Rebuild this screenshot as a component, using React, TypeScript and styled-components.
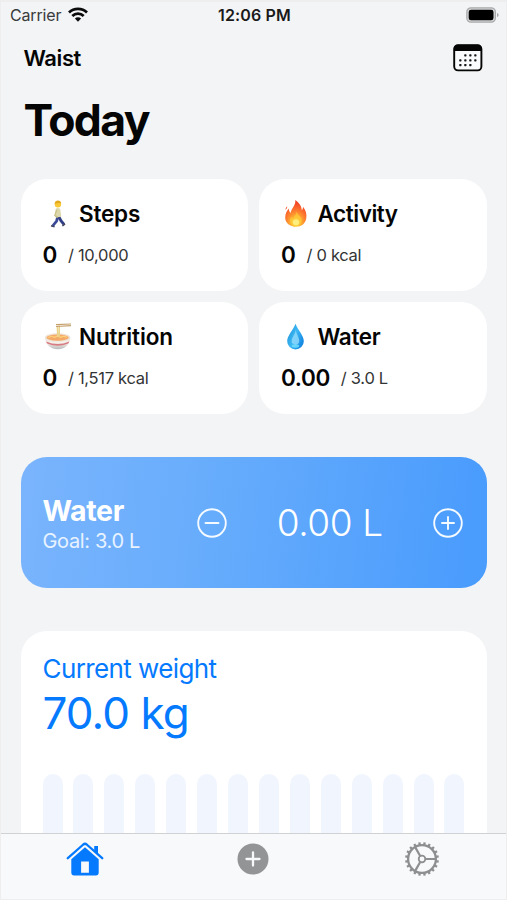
import React from "react";
import styled, { createGlobalStyle } from "styled-components";

const GlobalStyle = createGlobalStyle`
  * { box-sizing: border-box; }
  html, body { margin: 0; padding: 0; background: #f3f4f6; }
  body { font-family: Inter, "Liberation Sans", sans-serif; color: #050505; }
  h1, h2, p { margin: 0; }
  button { padding: 0; border: 0; background: none; color: inherit; display: block; }
  svg { display: block; }
`;

const Screen = styled.div`
  width: 507px;
  height: 900px;
  overflow: hidden;
  display: flex;
  flex-direction: column;
  background: #f3f4f6;
  border: 1px solid #eeeeef;
  border-top-width: 2px;
`;

const StatusBar = styled.div`
  height: 28px;
  flex: none;
  display: grid;
  grid-template-columns: 1fr auto 1fr;
  align-items: center;
  padding: 0 7px 3px 9px;
`;

const Label = styled.span<{ $size: number; $line: number; $weight?: number; $track?: number; $color?: string }>`
  display: block;
  white-space: nowrap;
  font-size: ${(p) => p.$size}px;
  line-height: ${(p) => p.$line}px;
  font-weight: ${(p) => p.$weight ?? 400};
  letter-spacing: ${(p) => p.$track ?? 0}px;
  color: ${(p) => p.$color ?? "inherit"};
`;

const Carrier = styled.div`
  display: flex;
  align-items: center;
  gap: 7px;
`;

const BatterySlot = styled.div`
  justify-self: end;
`;

const Content = styled.main`
  flex: 1;
  min-height: 0;
  overflow: hidden;
  display: flex;
  flex-direction: column;
  padding: 0 19.5px;
`;

const TopRow = styled.header`
  height: 56px;
  flex: none;
  display: flex;
  align-items: center;
  justify-content: space-between;
  padding: 0 4px 0 3px;
`;

const Title = styled.div`
  height: 93px;
  flex: none;
  padding: 4px 0 0 3px;
`;

const Stats = styled.section`
  flex: none;
  display: grid;
  grid-template-columns: 1fr 1fr;
  grid-auto-rows: 112px;
  gap: 11px;
`;

const StatCard = styled.article`
  border-radius: 26px;
  background: #fff;
  padding: 20px 22px;
`;

const StatHead = styled.div`
  display: flex;
  align-items: center;
  gap: 6.5px;
  height: 30px;
`;

const StatValue = styled.div`
  display: flex;
  align-items: center;
  gap: 11px;
  margin-top: 11px;
`;

const WaterCard = styled.section`
  flex: none;
  height: 131px;
  margin-top: 43px;
  border-radius: 26px;
  padding: 0 24px 0 22px;
  display: flex;
  align-items: center;
  color: #fff;
  background: linear-gradient(97deg, #7ab4fd 0%, #68adfc 38%, #4a9cfd 96%);
`;

const WaterInfo = styled.div`
  width: 154.5px;
  padding-top: 4px;
`;

const WaterAmount = styled.div`
  flex: 1;
  display: flex;
  justify-content: center;
`;

const WeightCard = styled.section`
  flex: none;
  height: 270px;
  margin-top: 43px;
  border-radius: 26px;
  padding: 21px 22px;
  background: #fff;
  color: #057aff;
`;

const Bars = styled.div`
  display: flex;
  justify-content: space-between;
  margin-top: 34px;
`;

const Bar = styled.div`
  width: 20px;
  height: 120px;
  border-radius: 10px;
  background: #f1f6fe;
`;

const TabBar = styled.nav`
  flex: none;
  height: 66px;
  border-top: 1px solid #cfd1d3;
  background: #f8f9fa;
  display: grid;
  grid-template-columns: repeat(3, 1fr);
  grid-template-rows: 36px;
  align-items: center;
  justify-items: center;
  padding-top: 7px;
`;

const WifiIcon = () => (
  <svg width="20" height="15" viewBox="0 0 20 15">
    <g fill="none" stroke="#0b0b0b" strokeWidth="2.7">
      <path d="M1 5.5a12.8 12.8 0 0 1 18 0" />
      <path d="M4.3 9a8.1 8.1 0 0 1 11.4 0" />
    </g>
    <path d="M10 14.7 6.9 11.5a4.4 4.4 0 0 1 6.2 0z" fill="#0b0b0b" />
  </svg>
);

const BatteryIcon = () => (
  <svg width="33" height="16" viewBox="0 0 33 16">
    <rect x="0.8" y="0.8" width="28.6" height="14.4" rx="4.2" fill="#d5d6d7" stroke="#a9aaab" strokeWidth="1.2" />
    <rect x="2.7" y="2.7" width="24.8" height="10.6" rx="2.4" fill="#000" />
    <path d="M31 6q1.7.5 1.7 2T31 10z" fill="#a9aaab" />
  </svg>
);

const dots: [number, number][] = [
  [12, 11], [17, 11], [22, 11],
  [7, 16], [12, 16], [17, 16], [22, 16],
  [7, 20.7], [12, 20.7], [17, 20.7],
];

const CalendarIcon = () => (
  <svg width="30" height="28" viewBox="0 0 30 28">
    <rect x="1.2" y="1.2" width="27.2" height="25.2" rx="3.8" fill="#fafbfc" stroke="#050505" strokeWidth="1.9" />
    <path d="M.8 7V4.8Q.8.8 4.8.8h20q4 0 4 4V7z" fill="#050505" />
    {dots.map(([x, y]) => (
      <rect key={`${x}-${y}`} x={x - 0.8} y={y - 0.8} width="2.3" height="2.3" rx=".7" fill="#17171c" />
    ))}
  </svg>
);

const WalkerIcon = () => (
  <svg width="30" height="30" viewBox="0 0 30 30">
    <path d="M15 17 13.6 22 9.6 27" fill="none" stroke="#3b4a98" strokeWidth="2.8" />
    <path d="m15.3 17 2.8 5 2.9 3.4" fill="none" stroke="#323f86" strokeWidth="2.9" />
    <path d="m8 26.8 3.6 1M19.4 27l2.6-2.2" stroke="#44465f" strokeWidth="1.6" />
    <path d="M12.6 10q2.2-2 4.6 0l1.2 7.7-6 .9z" fill="#dcd8ac" />
    <path d="m13.7 11-1.9 5.4 2.9 2" fill="none" stroke="#c9bf86" strokeWidth="1.3" />
    <circle cx="14.9" cy="5.3" r="3.2" fill="#fac936" />
    <path d="M11.7 5q.2-3.5 3.3-3.6 2.7.1 3.2 2.9l-3.2-.4z" fill="#e2a71d" />
  </svg>
);

const FlameIcon = () => (
  <svg width="30" height="30" viewBox="0 0 30 30">
    <defs>
      <radialGradient id="flame" cx=".5" cy=".88" r=".85">
        <stop offset="0" stopColor="#ffe13b" />
        <stop offset=".3" stopColor="#ffad31" />
        <stop offset=".65" stopColor="#fc6c2d" />
        <stop offset="1" stopColor="#ed3926" />
      </radialGradient>
    </defs>
    <path d="M14.3 1c4.6 3.2 6.2 6.5 6.5 10.2 1-1 1.3-2.4 1.2-3.5 2.8 3.3 4.1 7.6 3.2 12-1 5-5 8-10 8-6.3 0-11-3.8-11-9.3 0-3.7 1.8-6.7 3.7-8.8.1 2 .5 3.3 1.6 4.4C10.7 8.9 15 6 14.3 1z" fill="url(#flame)" />
    <path d="M6.2 7.2q-1.7 1.5-1.8 3.7 2.4-1.2 1.8-3.7z" fill="#f45129" />
    <path d="M15.5 12c.8 4 4.6 4.5 5.2 8.7.4 3.4-2 5.7-5.4 5.8-3.8.1-6.5-2.1-6.4-5.2.1-2 1.4-3.1 2.2-3.3.2 1 .5 1.6 1.2 2 .1-3.1 3.7-4.4 3.2-8z" fill="#ffd43b" opacity=".6" />
    <ellipse cx="15" cy="23.2" rx="3.2" ry="3" fill="#fff58e" opacity=".8" />
  </svg>
);

const BowlIcon = () => (
  <svg width="30" height="30" viewBox="0 0 30 30">
    <defs>
      <linearGradient id="bowl" x1="0" y1="0" x2="0" y2="1">
        <stop offset="0" stopColor="#e9e2dc" />
        <stop offset=".45" stopColor="#f7f1ea" />
        <stop offset="1" stopColor="#b9babd" />
      </linearGradient>
    </defs>
    <path d="M2 15.7c.4 6.2 4 9.2 8 10.7q5 1.5 9.5 0c4.7-1.8 7.3-5.1 7.8-10.7z" fill="url(#bowl)" />
    <path d="M3.1 19.4q11.6 5.1 23.2 0l-1 2q-10.6 4.6-21.3 0z" fill="#d77c83" />
    <ellipse cx="14.6" cy="15.3" rx="12.6" ry="4" fill="#eee1d3" />
    <ellipse cx="14.6" cy="15.6" rx="11.1" ry="3.1" fill="#f4a968" />
    <path d="M5.3 15.7q3.4-2.3 6.2-.2 3.4-2.7 6 0 3.2-2.2 6.2 0" fill="none" stroke="#ffd17a" strokeWidth="1.1" />
    <path d="m14.3 4.3.5 11M16.3 3.6l-.1 11" stroke="#ead48c" strokeWidth="1.5" />
    <path d="m13 2.6 15-.6M13 4.5l15-.9" stroke="#c5a06c" strokeWidth="1.2" />
  </svg>
);

const DropIcon = () => (
  <svg width="30" height="30" viewBox="0 0 30 30">
    <defs>
      <linearGradient id="drop" x1="0" y1="0" x2="1" y2=".6">
        <stop offset="0" stopColor="#168bd1" />
        <stop offset=".55" stopColor="#3fb9f5" />
        <stop offset="1" stopColor="#1689e2" />
      </linearGradient>
    </defs>
    <path d="M14.5 1.8c2.6 7 8.3 11.5 8.3 17.4a8.3 8.3 0 0 1-16.6 0C6.2 13.3 12 8.8 14.5 1.8z" fill="url(#drop)" />
    <path d="M14.5 6.6c1 6-4.9 8.4-3.6 14.2 2 2.8 6.2 2.5 7.2-.6 1.2-4.5-3.4-7.7-3.6-13.6z" fill="#9adefd" opacity=".75" />
    <ellipse cx="14.5" cy="24" rx="3.7" ry="1.7" fill="#7be5ff" opacity=".75" />
  </svg>
);

const CircleButtonIcon = ({ plus = false }: { plus?: boolean }) => (
  <svg width="30" height="30" viewBox="0 0 30 30" fill="none" stroke="#f4faff" strokeWidth="1.9" strokeLinecap="round">
    <circle cx="15" cy="15" r="13.8" />
    <path d={plus ? "M9 15h12M15 9v12" : "M8.5 15h13"} />
  </svg>
);

const HomeIcon = () => (
  <svg width="38" height="34" viewBox="0 0 38 34">
    <path d="M1.8 16.2 17.3 2.5q1.7-1.4 3.4 0L36.2 16.2" fill="none" stroke="#057aff" strokeWidth="2.3" strokeLinecap="round" />
    <path d="M28.2 9V4h3.8v8.4z" fill="#057aff" />
    <path fillRule="evenodd" d="M5.3 17.2 19 5.2 32.7 17.2V30.5q0 2.9-2.9 2.9H8.2q-2.9 0-2.9-2.9zM15.1 19.5v11.3h7.8V19.5z" fill="#057aff" />
  </svg>
);

const AddIcon = () => (
  <svg width="32" height="32" viewBox="0 0 32 32">
    <circle cx="16" cy="16" r="15.5" fill="#939495" />
    <path d="M9.5 16h13M16 9.5v13" stroke="#f8f9fa" strokeWidth="2.3" strokeLinecap="round" />
  </svg>
);

const teeth = Array.from({ length: 20 }, (_, i) => i * 18 + 9);

const GearIcon = () => (
  <svg width="36" height="36" viewBox="0 0 36 36" fill="none" stroke="#8e8f91">
    <circle cx="18" cy="18" r="13.9" strokeWidth="2.3" />
    {teeth.map((a) => (
      <path key={a} d="M18 1.1v3" strokeWidth="2.3" transform={`rotate(${a} 18 18)`} />
    ))}
    <circle cx="18" cy="18" r="3.3" strokeWidth="1.8" />
    <path d="M21.5 18H31M16.2 15 11.3 6.4M16.2 21 11.3 29.6" strokeWidth="2.2" />
  </svg>
);

type Stat = { name: string; value: string; goal: string; icon: React.ReactNode; track: number };

const stats: Stat[] = [
  { name: "Steps", value: "0", goal: "/ 10,000", icon: <WalkerIcon />, track: -0.2 },
  { name: "Activity", value: "0", goal: "/ 0 kcal", icon: <FlameIcon />, track: -0.45 },
  { name: "Nutrition", value: "0", goal: "/ 1,517 kcal", icon: <BowlIcon />, track: -0.15 },
  { name: "Water", value: "0.00", goal: "/ 3.0 L", icon: <DropIcon />, track: -0.35 },
];

export default function App() {
  return (
    <>
      <GlobalStyle />
      <Screen>
        <StatusBar>
          <Carrier>
            <Label $size={16} $line={20} $track={-0.15} $color="#3a3b3c">Carrier</Label>
            <WifiIcon />
          </Carrier>
          <Label $size={16} $line={20} $weight={600} $track={0.15} $color="#1a1a1a">12:06 PM</Label>
          <BatterySlot><BatteryIcon /></BatterySlot>
        </StatusBar>
        <Content>
          <TopRow>
            <Label as="h2" $size={22} $line={28} $weight={600} $track={-0.4}>Waist</Label>
            <button aria-label="Calendar"><CalendarIcon /></button>
          </TopRow>
          <Title>
            <Label as="h1" $size={44.5} $line={60} $weight={700} $track={-1.6}>Today</Label>
          </Title>
          <Stats>
            {stats.map((s) => (
              <StatCard key={s.name}>
                <StatHead>
                  {s.icon}
                  <Label $size={22.5} $line={30} $weight={600} $track={s.track}>{s.name}</Label>
                </StatHead>
                <StatValue>
                  <Label $size={22.5} $line={30} $weight={600} $track={-0.4}>{s.value}</Label>
                  <Label $size={16.5} $line={30} $track={-0.3} $color="#333435">{s.goal}</Label>
                </StatValue>
              </StatCard>
            ))}
          </Stats>
          <WaterCard>
            <WaterInfo>
              <Label as="h2" $size={28.5} $line={34} $weight={700} $track={-0.35}>Water</Label>
              <Label as="p" $size={20} $line={27} $track={-0.35} $color="#e8f3ff">Goal: 3.0 L</Label>
            </WaterInfo>
            <button aria-label="Remove water"><CircleButtonIcon /></button>
            <WaterAmount>
              <Label $size={37} $line={44} $weight={350} $track={-0.4}>0.00 L</Label>
            </WaterAmount>
            <button aria-label="Add water"><CircleButtonIcon plus /></button>
          </WaterCard>
          <WeightCard>
            <Label as="h2" $size={26} $line={34} $track={-0.6}>Current weight</Label>
            <Label as="p" $size={44} $line={54} $track={-0.9}>70.0 kg</Label>
            <Bars>
              {Array.from({ length: 14 }, (_, i) => <Bar key={i} />)}
            </Bars>
          </WeightCard>
        </Content>
        <TabBar>
          <button aria-label="Home"><HomeIcon /></button>
          <button aria-label="Add"><AddIcon /></button>
          <button aria-label="Settings"><GearIcon /></button>
        </TabBar>
      </Screen>
    </>
  );
}
